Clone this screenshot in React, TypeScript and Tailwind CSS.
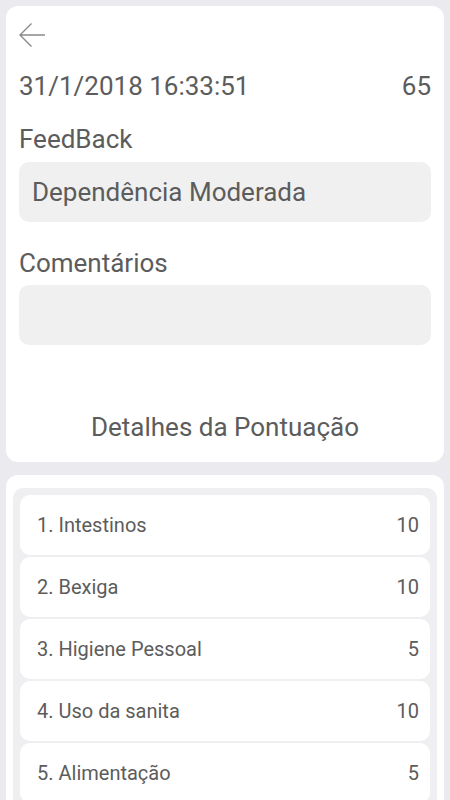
import React from 'react';

const scores = [
  { label: '1. Intestinos', value: 10 },
  { label: '2. Bexiga', value: 10 },
  { label: '3. Higiene Pessoal', value: 5 },
  { label: '4. Uso da sanita', value: 10 },
  { label: '5. Alimentação', value: 5 },
];

const App: React.FC = () => {
  return (
    <div className="min-h-[800px] bg-[#ebebef] px-[6px] pt-[6px] font-['Roboto',sans-serif] text-[#5c5c5c]">
      <div className="rounded-[12px] bg-white px-[13px] pt-[17px] pb-[19px]">
        <button className="block h-[24px] w-[26px]">
          <svg width="26" height="24" viewBox="0 0 26 24" fill="none" stroke="#8a8a8a" strokeWidth="1.4">
            <path d="M1 12h25M12.5 0.5L1 12l11.5 11.5" />
          </svg>
        </button>

        <div className="mt-[23px] flex items-center justify-between text-[26px] leading-[32px]">
          <span>31/1/2018 16:33:51</span>
          <span>65</span>
        </div>

        <div className="mt-[21px] text-[26px] leading-[32px]">FeedBack</div>
        <div className="mt-[7px] flex h-[60px] items-center rounded-[10px] bg-[#f0f0f0] px-[13px] text-[26px]">
          Dependência Moderada
        </div>

        <div className="mt-[25px] text-[26px] leading-[32px]">Comentários</div>
        <div className="mt-[6px] h-[60px] rounded-[10px] bg-[#f0f0f0]" />

        <div className="mt-[66px] text-center text-[26px] leading-[32px]">Detalhes da Pontuação</div>
      </div>

      <div className="mt-[13px] rounded-t-[12px] bg-white px-[7px] pt-[13px]">
        <div className="flex flex-col gap-[2px] rounded-t-[10px] bg-[#efeff1] px-[7px] pt-[7px]">
          {scores.map((s) => (
            <div
              key={s.label}
              className="flex h-[60px] items-center justify-between rounded-[10px] bg-white pl-[17px] pr-[11px] text-[20px]"
            >
              <span>{s.label}</span>
              <span>{s.value}</span>
            </div>
          ))}
        </div>
      </div>
    </div>
  );
};

export default App;
